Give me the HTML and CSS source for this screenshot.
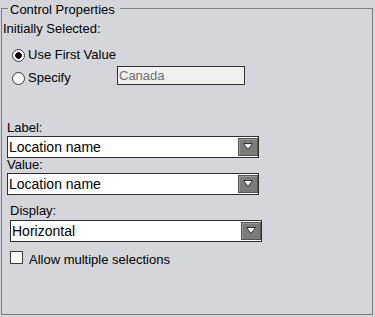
FILE: index.html
```html
<!DOCTYPE html>
<html>
<head>
<meta charset="utf-8">
<link rel="stylesheet" href="styles.css">
</head>
<body>
<fieldset class="group">
  <legend class="group-title">Control Properties</legend>
  <div class="section-title">Initially Selected:</div>
  <div class="radio-row">
    <label class="radio"><input type="radio" name="init" checked><span>Use First Value</span></label>
  </div>
  <div class="radio-row specify-row">
    <label class="radio specify"><input type="radio" name="init"><span>Specify</span></label>
    <input class="text-input" type="text" value="Canada" disabled>
  </div>
  <div class="fields">
    <div class="field-label">Label:</div>
    <div class="select">
      <span class="select-text">Location name</span>
      <span class="select-btn"><svg width="20" height="18" viewBox="0 0 20 18"><polygon points="5.5,5.5 14.5,5.5 10,11.5" fill="#fff" stroke="#333" stroke-width="1"/></svg></span>
    </div>
    <div class="field-label">Value:</div>
    <div class="select">
      <span class="select-text">Location name</span>
      <span class="select-btn"><svg width="20" height="18" viewBox="0 0 20 18"><polygon points="5.5,5.5 14.5,5.5 10,11.5" fill="#fff" stroke="#333" stroke-width="1"/></svg></span>
    </div>
  </div>
  <div class="fields display">
    <div class="field-label">Display:</div>
    <div class="select">
      <span class="select-text">Horizontal</span>
      <span class="select-btn"><svg width="20" height="18" viewBox="0 0 20 18"><polygon points="5.5,5.5 14.5,5.5 10,11.5" fill="#fff" stroke="#333" stroke-width="1"/></svg></span>
    </div>
  </div>
  <label class="check"><input type="checkbox"><span>Allow multiple selections</span></label>
</fieldset>
</body>
</html>
```
FILE: styles.css
```css
html, body {
  margin: 0;
  padding: 0;
  background: #d5d6db;
}
body {
  width: 375px;
  height: 317px;
  overflow: hidden;
  font-family: "Liberation Sans", Arial, sans-serif;
  font-size: 13px;
  color: #000;
}
.group {
  box-sizing: border-box;
  margin: 0 2px 0 1px;
  height: 315px;
  padding: 0 0 0 1px;
  border: 1px solid #7c7c7e;
  min-width: 0;
}
.group-title {
  margin-left: 5px;
  padding: 2px 5px 0 2px;
  line-height: 15px;
  font-size: 13px;
}
.section-title {
  margin-top: 4px;
  line-height: 16px;
}
.radio-row {
  display: flex;
  align-items: flex-start;
  margin-top: 10px;
}
.specify-row {
  margin-top: 3px;
}
.radio {
  display: flex;
  align-items: center;
  height: 16px;
  line-height: 16px;
}
.specify {
  margin-top: 4px;
  width: 114px;
}
.radio input {
  appearance: none;
  -webkit-appearance: none;
  box-sizing: border-box;
  width: 13px;
  height: 13px;
  margin: 0 3px 0 9px;
  border: 1px solid #3c3c3c;
  border-radius: 50%;
  background: radial-gradient(circle at 50% 50%, #fff 0, #fff 55%, #e6e6e6 100%);
}
.radio input:checked {
  background: radial-gradient(circle at 50% 50%, #000 0, #000 3px, #fff 3.6px, #fff 100%);
}
.text-input {
  box-sizing: border-box;
  width: 128px;
  height: 19px;
  margin: 0;
  padding: 0 0 0 1px;
  border: 1px solid #333;
  background: #f0f0f0;
  font-family: "Liberation Sans", Arial, sans-serif;
  font-size: 13px;
  color: #6e6e72;
  -webkit-text-fill-color: #6e6e72;
  opacity: 1;
}
.fields {
  margin-top: 34px;
  padding-left: 4px;
  width: 252px;
}
.field-label {
  line-height: 15px;
}
.fields > .select {
  margin-top: 1px;
}
.fields > .select + .field-label {
  margin-top: -1px;
}
.select {
  box-sizing: border-box;
  display: flex;
  align-items: flex-start;
  height: 22px;
  border: 1px solid #2e2e2e;
  background: #fff;
}
.select-text {
  flex: 1;
  padding-left: 1px;
  font-size: 14px;
  line-height: 20px;
}
.select-btn {
  box-sizing: border-box;
  display: block;
  width: 20px;
  height: 18px;
  margin: 1px 0 0 0;
  background: #7b7b7b;
  border: 1px solid #555;
  box-shadow: inset 1px 1px 0 #9a9a9a;
}
.select-btn svg {
  display: block;
  margin: -1px 0 0 -1px;
}
.display {
  margin-top: 8px;
  padding-left: 7px;
}
.display > .select {
  margin-top: 2px;
}
.check {
  display: flex;
  align-items: flex-start;
  margin-top: 9px;
  padding-left: 7px;
}
.check input {
  appearance: none;
  -webkit-appearance: none;
  box-sizing: border-box;
  width: 13px;
  height: 13px;
  margin: 0 6px 0 0;
  border: 1px solid #3a3a3a;
  background: #fff;
}
.check span {
  margin-top: 1px;
  line-height: 16px;
}
```
